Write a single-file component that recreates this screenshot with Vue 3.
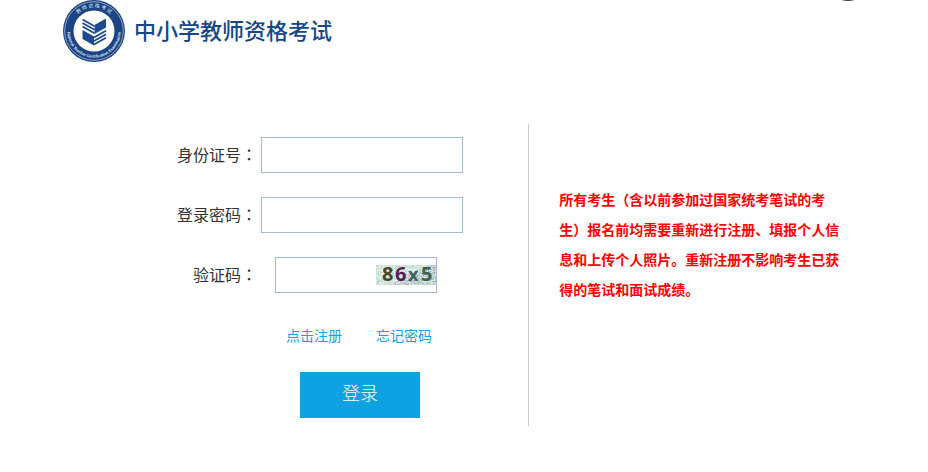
<template>
  <div class="page">
    <span class="float-dot" aria-hidden="true"></span>

    <header class="header">
      <svg class="logo" viewBox="0 0 62 62" aria-hidden="true">
        <defs>
          <path id="arc-top" d="M 7.5 31 A 23.5 23.5 0 0 1 54.5 31" />
          <path id="arc-bottom" d="M 4.6 27 A 26.7 26.7 0 1 0 57.4 27" />
        </defs>
        <circle cx="31" cy="31" r="31" fill="#1c4484" />
        <circle cx="31" cy="31" r="29.3" fill="none" stroke="#a9bbd6" stroke-width="0.8" />
        <circle cx="31" cy="31" r="20.5" fill="#fff" />
        <text class="seal-cn"><textPath href="#arc-top" startOffset="50%">教 师 资 格 考 试</textPath></text>
        <text class="seal-en"><textPath href="#arc-bottom" startOffset="50%">National Teacher Certification Examination</textPath></text>
        <g fill="#1c4a8c">
          <path d="M31.5 25 L43 18.500 V27.500 L31.5 34 Z" />
          <path d="M19.500 30 L31 36.500 V45.500 L19.500 39 Z" />
        </g>
        <g fill="none" stroke="#1c4a8c" stroke-width="1.8">
          <path d="M19.500 19.500 L31.500 26.300" />
          <path d="M19.500 23 L31.500 29.800" />
          <path d="M19.500 26.500 L31.500 33.300" />
          <path d="M31 37.500 L43 30.700" />
          <path d="M31 41 L43 34.200" />
          <path d="M31 44.500 L43 37.700" />
        </g>
      </svg>
      <h1>中小学教师资格考试</h1>
    </header>

    <main class="main">
      <form class="login" @submit.prevent>
        <div class="row">
          <label for="idcard">身份证号<span class="colon">：</span></label>
          <input id="idcard" v-model="form.idcard" type="text" />
        </div>
        <div class="row">
          <label for="password">登录密码<span class="colon">：</span></label>
          <input id="password" v-model="form.password" type="password" />
        </div>
        <div class="row">
          <label for="code">验证码<span class="colon">：</span></label>
          <div class="code-box">
            <input id="code" v-model="form.code" type="text" />
            <svg class="captcha" viewBox="0 0 60 20">
              <rect width="60" height="20" fill="#d0e4dd" />
              <rect v-for="(n, i) in noise" :key="i" :x="n.x" :y="n.y" width="1" height="1" :fill="n.color" />
              <text x="6" y="16" fill="#4a4528">8</text>
              <text x="19" y="16" fill="#561b58">6</text>
              <text x="32" y="16" class="small" fill="#465c64">x</text>
              <text x="45" y="16" fill="#3f5f57">5</text>
            </svg>
          </div>
        </div>
        <div class="links">
          <a href="#">点击注册</a>
          <a href="#">忘记密码</a>
        </div>
        <button type="submit" class="submit">登录</button>
      </form>

      <aside class="notice">
        <p>所有考生（含以前参加过国家统考笔试的考生）报名前均需要重新进行注册、填报个人信息和上传个人照片。重新注册不影响考生已获得的笔试和面试成绩。</p>
      </aside>
    </main>
  </div>
</template>

<script setup>
import { reactive } from 'vue';

const form = reactive({
  idcard: '',
  password: '',
  code: ''
});

const light = ['#e4f7f1', '#d6ebe4', '#c6dcd4', '#dcefe9', '#b9cdc6'];
const dark = ['#a9bdb6', '#bccbc7', '#9fb2ac', '#cfe2db', '#b4c4c0'];

function makeNoise() {
  const dots = [];
  let seed = 86;
  for (let y = 0; y < 20; y++) {
    for (let x = 0; x < 60; x++) {
      seed = (seed * 16807) % 2147483647;
      const colors = x + y * 2 > 50 ? dark : light;
      if (seed % 100 < 60) {
        dots.push({ x, y, color: colors[Math.floor(seed / 100) % colors.length] });
      }
    }
  }
  return dots;
}

const noise = makeNoise();
</script>

<style>
body {
  margin: 0;
  background: #fff;
}
</style>

<style scoped>
.page {
  position: relative;
  font-family: "Noto Sans CJK SC", sans-serif;
  color: #333;
  overflow: hidden;
}

.float-dot {
  position: absolute;
  top: -39px;
  right: 60px;
  width: 40px;
  height: 40px;
  border-radius: 50%;
  background: #2f3b3b;
}

.header,
.main {
  max-width: 802px;
  margin: 0 auto;
}

.header {
  display: flex;
  align-items: center;
  gap: 9px;
  height: 62px;
}

.logo {
  width: 62px;
  height: 62px;
}

.seal-cn,
.seal-en {
  fill: #dfe8f4;
  text-anchor: middle;
}

.seal-cn {
  font-size: 5px;
}

.seal-en {
  font: bold 4px "Liberation Sans", sans-serif;
}

h1 {
  margin: 0;
  padding-bottom: 4px;
  font-size: 22px;
  line-height: 32px;
  font-weight: 500;
  color: #16478a;
}

.main {
  display: flex;
  margin-top: 62px;
}

.login {
  flex: 0 0 58%;
  box-sizing: border-box;
  padding: 13px 0 8px;
}

.row {
  display: grid;
  grid-template-columns: 194px 202px;
  column-gap: 4px;
  align-items: center;
  margin-bottom: 24px;
}

label {
  text-align: right;
  font-size: 16px;
  line-height: 34px;
  padding-bottom: 2px;
}

.colon {
  font-family: "Noto Sans CJK TC", sans-serif;
}

.row input {
  box-sizing: border-box;
  width: 100%;
  height: 36px;
  padding: 0 8px;
  border: 1px solid #a5bacd;
  background: #fff;
  font-size: 14px;
  outline: none;
}

.code-box {
  position: relative;
  width: 162px;
  margin-left: 14px;
}

.row .code-box input {
  display: block;
  padding-right: 64px;
}

.captcha {
  position: absolute;
  top: 8px;
  right: 1px;
  width: 60px;
  height: 20px;
  overflow: visible;
  font: bold 20px "Open Sans", sans-serif;
}

.captcha .small {
  font-size: 18px;
}

.links {
  display: flex;
  gap: 34px;
  padding-left: 223px;
  font-size: 14px;
  line-height: 36px;
}

.links a {
  color: #0fa2e3;
  text-decoration: none;
}

.submit {
  display: block;
  width: 120px;
  height: 46px;
  margin: 19px 0 0 237px;
  padding: 0 0 6px;
  border: 0;
  background: #0fa2e3;
  color: #fff;
  font-family: inherit;
  font-size: 18px;
  font-weight: 300;
  cursor: pointer;
}

.notice {
  flex: 1;
  padding: 60px 24px 0 30px;
  border-left: 1px solid #ccc;
}

.notice p {
  max-width: 280px;
  margin: 0;
  font-size: 14px;
  line-height: 30px;
  font-weight: 700;
  color: #f00;
}
</style>
